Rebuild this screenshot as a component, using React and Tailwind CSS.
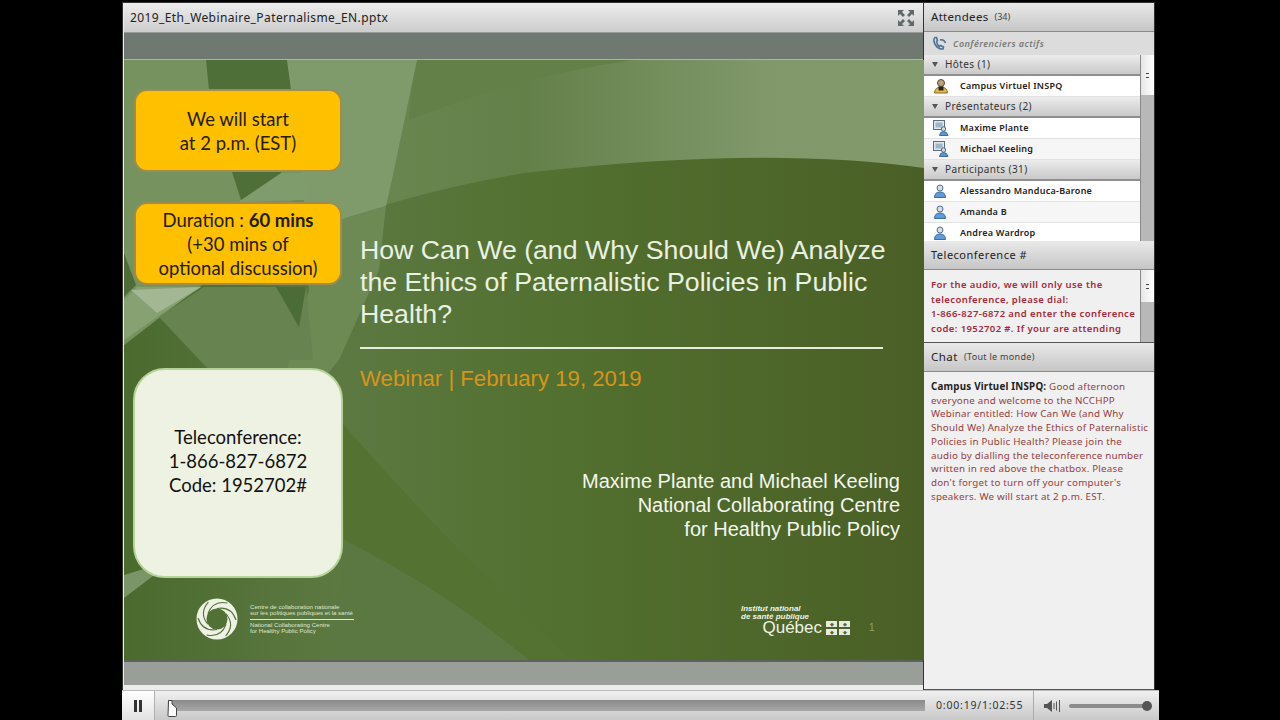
const ui = "font-['Noto_Sans',sans-serif]";

function GroupHeader({ label }) {
  return (
    <div className="h-[21px] flex items-center pl-[8px] bg-gradient-to-b from-[#ececec] to-[#c9c9c9] border-b-2 border-[#8f8f8f] text-[10px] tracking-[0.4px] text-[#333] shrink-0">
      <span className="w-0 h-0 border-l-[3px] border-r-[3px] border-t-[5px] border-l-transparent border-r-transparent border-t-[#555] mr-[7px]" />
      {label}
    </div>
  );
}

function HostIcon() {
  return (
    <svg width="16" height="16" viewBox="0 0 16 16">
      <circle cx="8" cy="5" r="3.5" fill="#b9a27a" stroke="#5b4a2a" />
      <path d="M1.5 15 Q2 9 8 9 Q14 9 14.5 15 Z" fill="#e6b84a" stroke="#8a6a20" />
      <rect x="5.5" y="8.5" width="5" height="4" fill="#222" />
    </svg>
  );
}

function PresenterIcon() {
  return (
    <svg width="16" height="16" viewBox="0 0 16 16">
      <rect x="0.5" y="0.5" width="11" height="9" fill="#dce6ee" stroke="#5c6c7a" />
      <rect x="2.5" y="2.5" width="7" height="5" fill="#9fb5c8" />
      <circle cx="10.5" cy="9" r="2.2" fill="#d5dce2" stroke="#4d6c8e" />
      <path d="M6.5 15.5 Q7 11.5 10.5 11.5 Q14 11.5 15 15.5 Z" fill="#5c97d2" stroke="#3d6c9e" />
    </svg>
  );
}

function ParticipantIcon() {
  return (
    <svg width="14" height="14" viewBox="0 0 14 14">
      <path d="M4 4 Q4 1 7 1 Q10 1 10 4 Q10 7 7 7 Q4 7 4 4 Z" fill="#d8dde2" stroke="#4f6f92" />
      <path d="M1.5 13.5 Q1.5 8 7 8 Q12.5 8 12.5 13.5 Z" fill="#5f9bd8" stroke="#3d6c9e" />
    </svg>
  );
}

function AttendeeRow({ name, icon, alt }) {
  return (
    <div className={`h-[21px] shrink-0 flex items-center border-b border-[#e2e2e2] ${alt ? "bg-[#f6f6f6]" : "bg-white"}`}>
      <span className="w-[36px] pl-[9px] flex items-center shrink-0">{icon}</span>
      <span className="text-[9px] font-semibold tracking-[0.25px] text-[#222]">{name}</span>
    </div>
  );
}

function Scrollbar({ thumb }) {
  return (
    <div className="w-[14px] bg-[#b8b8b8] border-l border-[#8a8a8a] shrink-0">
      <div className={`${thumb} bg-gradient-to-r from-[#e6e6e6] to-white flex items-center justify-center`}>
        <span className="w-[3px] h-[5px] border-y border-[#444]" />
      </div>
    </div>
  );
}

function PanelHeader({ children }) {
  return (
    <div className="h-[29px] shrink-0 flex items-center pl-[7px] bg-gradient-to-b from-[#e9e9e9] to-[#c6c6c6] border-b border-[#8a8a8a] text-[#222]">
      {children}
    </div>
  );
}

function SlideBackground() {
  return (
    <svg className="absolute inset-0 w-full h-full" viewBox="0 0 800 600" preserveAspectRatio="none">
      <defs>
        <linearGradient id="base" x1="0" x2="1" y1="0" y2="0">
          <stop offset="0" stopColor="#4a6a2e" />
          <stop offset="0.27" stopColor="#5c7942" />
          <stop offset="0.55" stopColor="#52702f" />
          <stop offset="1" stopColor="#4a5f26" />
        </linearGradient>
        <linearGradient id="upper" x1="0" x2="1" y1="0" y2="0">
          <stop offset="0.3" stopColor="#6b8751" />
          <stop offset="0.5" stopColor="#648049" />
          <stop offset="0.8" stopColor="#80986a" />
          <stop offset="1" stopColor="#829a6c" />
        </linearGradient>
      </defs>
      <rect width="800" height="600" fill="url(#base)" />
      {/* lower sweeps */}
      <path d="M218 363 Q320 480 447 600 L405 600 Q320 530 220 480 Z" fill="#547231" />
      <path d="M220 480 Q320 530 405 600 H200 L218 517 Z" fill="#5c7842" />
      <path d="M0 515 L50 500 L0 538 Z" fill="#7a9668" />
      {/* upper band */}
      <path d="M0 0 H800 V108 Q640 85 400 113 Q300 130 222 158 L75 227 L0 285 Z" fill="url(#upper)" />
      <path d="M290 0 H510 Q400 15 285 60 Z" fill="#648049" />
      <path d="M0 0 H163 L180 130 L75 227 L0 285 Z" fill="#76935f" />
      <path d="M160 0 H293 L270 110 L262 146 L222 158 L180 175 L180 130 Z" fill="#7f9b6b" />
      <path d="M180 175 L222 158 L262 146 L255 210 L215 300 L165 300 L185 230 Z" fill="#6d8a55" />
      <path d="M117 140 L157 113 L180 113 L184 140 L115 142 Z" fill="#7f9c6c" />
      <path d="M82 0 H163 L167 30 L157 113 L117 140 L108 112 L85 30 Z" fill="#4f6f38" />
      <path d="M35 257 L80 227 H182 L190 310 H85 Z" fill="#678450" />
      <path d="M165 300 L215 300 L205 312 H163 Z" fill="#6d8a55" />
      <path d="M152 227 H182 L175 267 Z" fill="#4c6c37" />
      <path d="M0 240 L13 227 H77 L33 257 L0 280 Z" fill="#87a172" />
      <path d="M7 230 L77 227 L33 253 Z" fill="#a3b795" />
      <path d="M0 193 L12 225 L0 237 Z" fill="#4d6c37" />
    </svg>
  );
}

function CallBox({ children, className }) {
  return (
    <div className={`w-[208px] bg-[#ffc000] border-2 border-[#a08c4c] rounded-[13px] flex flex-col items-center justify-center text-[#241c00] text-[18.5px] leading-[24px] text-center ${className}`}>
      {children}
    </div>
  );
}

function Spiral() {
  return (
    <svg width="42" height="42" viewBox="0 0 42 42" fill="none">
      <circle cx="21" cy="21" r="15.5" stroke="#eef2e4" strokeWidth="10" />
      {[0, 60, 120, 180, 240, 300].map((a) => (
        <path key={a} d="M21 10.5 C30 9 37 13 40 22" stroke="#547136" strokeWidth="1.1" transform={`rotate(${a} 21 21)`} />
      ))}
    </svg>
  );
}

function QuebecFlag() {
  return (
    <div className="grid grid-cols-2 gap-x-[2px] gap-y-[2px] ml-[4px]">
      {[0, 1, 2, 3].map((i) => (
        <span key={i} className="w-[11px] h-[6px] bg-[#e8ebe0] flex items-center justify-center text-[5px] leading-none text-[#4f6a2c]">
          ◆
        </span>
      ))}
    </div>
  );
}

export default function App() {
  return (
    <div className={`w-[1280px] h-[720px] bg-black overflow-hidden pl-[122px] pt-[2px] ${ui}`}>
      <div className="w-[1037px] h-[718px] flex flex-col bg-black">
        <div className="h-[688px] flex shrink-0">
          {/* document pod */}
          <div className="w-[801px] flex flex-col border-l border-t border-[#333] pl-[1px] bg-[#ececec]">
            <div className="h-[30px] flex items-center justify-between pl-[6px] pr-[9px] bg-gradient-to-b from-[#ededed] to-[#cdcdcd] border-b border-[#9a9a9a]">
              <span className="text-[12px] tracking-[0.4px] text-[#222]">2019_Eth_Webinaire_Paternalisme_EN.pptx</span>
              <svg width="16" height="16" viewBox="0 0 16 16" fill="#5f6a6a">
                <path d="M0 0H6L4 2L7 5L5 7L2 4L0 6Z" />
                <path d="M16 0H10L12 2L9 5L11 7L14 4L16 6Z" />
                <path d="M0 16H6L4 14L7 11L5 9L2 12L0 10Z" />
                <path d="M16 16H10L12 14L9 11L11 9L14 12L16 10Z" />
              </svg>
            </div>
            <div className="h-[27px] bg-[#6f7871] border-b border-[#a9b5a3]" />
            <div className="relative h-[600px] w-[800px] overflow-hidden flex">
              <SlideBackground />
              <div className="relative w-[236px] shrink-0 pl-[10px] pt-[29px] flex flex-col font-['Lato',sans-serif]">
                <CallBox className="h-[83px]">
                  <span>We will start</span>
                  <span>at 2 p.m. (EST)</span>
                </CallBox>
                <CallBox className="h-[83px] mt-[30px]">
                  <span>Duration : <b>60 mins</b></span>
                  <span>(+30 mins of</span>
                  <span>optional discussion)</span>
                </CallBox>
                <div className="w-[210px] h-[210px] -ml-[1px] mt-[83px] bg-[#eef2e2] border-2 border-[#b7d39a] rounded-[32px] flex flex-col items-center justify-center text-[#111] text-[18.5px] leading-[24px] pb-[25px]">
                  <span>Teleconference:</span>
                  <span>1-866-827-6872</span>
                  <span>Code: 1952702#</span>
                </div>
                <div className="flex items-center mt-[20px] pl-[62px] w-[300px]">
                  <Spiral />
                  <div className="ml-[12px] text-[#dfe6d2] text-[6.1px] leading-[6.5px] font-['Liberation_Sans',sans-serif] whitespace-nowrap">
                    <div className="border-b border-[#dfe6d2] pb-[2px] mb-[2px] w-[104px]">Centre de collaboration nationale<br />sur les politiques publiques et la santé</div>
                    <div>National Collaborating Centre<br />for Healthy Public Policy</div>
                  </div>
                </div>
              </div>
              <div className="relative flex-1 pt-[174px] font-['Liberation_Sans',sans-serif] flex flex-col">
                <h1 className="text-[26.7px] leading-[32px] text-[#eaf0e2] w-[540px] font-normal">
                  How Can We (and Why Should We) Analyze the Ethics of Paternalistic Policies in Public Health?
                </h1>
                <div className="h-[2px] w-[523px] bg-[#e8ecdd] mt-[17px]" />
                <div className="text-[22.2px] leading-[24px] text-[#d8941a] mt-[18px]">Webinar | February 19, 2019</div>
                <div className="mt-[78px] w-[540px] text-right text-[#f4f6ef] text-[20px] leading-[24px]">
                  <div>Maxime Plante and Michael Keeling</div>
                  <div>National Collaborating Centre</div>
                  <div>for Healthy Public Policy</div>
                </div>
                <div className="flex items-end mt-[64px] ml-[381px]">
                  <div className="w-[109px] text-[#eef2e4]">
                    <div className="text-[8px] leading-[7.5px] font-bold italic">Institut national<br />de santé publique</div>
                    <div className="flex items-center justify-end mt-[1px]">
                      <span className="text-[17px] leading-[14px]">Québec</span>
                      <QuebecFlag />
                    </div>
                  </div>
                  <span className="text-[10px] text-[#8fa176] ml-[19px]">1</span>
                </div>
              </div>
            </div>
            <div className="h-[25px] bg-[#9a9e99] border-t-2 border-[#5e625c]" />
          </div>

          {/* right column */}
          <div className="w-[232px] flex flex-col border-t border-r border-l border-[#333] bg-[#f0f0f0]">
            <PanelHeader>
              <span className="text-[11.5px] tracking-[0.3px]">Attendees</span>
              <span className="text-[9px] ml-[6px] text-[#444]">(34)</span>
            </PanelHeader>
            <div className="h-[23px] shrink-0 flex items-center pl-[8px] bg-[#dcdcdc] text-[#7a7a7a] italic text-[9px] tracking-[0.45px] font-semibold">
              <svg width="15" height="15" viewBox="0 0 15 15" fill="none" stroke="#4d7396" strokeWidth="1.6" className="mr-[6px]">
                <path d="M3 1.5 Q0.5 4 3.5 9 Q6.5 13.5 11 13 L11.5 11 L8.5 9.5 L7.5 10.5 Q5 9 4.5 5.5 L5.5 4.5 L4.5 1.5 Z" />
                <path d="M8 4 Q12 3 13.5 7" />
              </svg>
              Conférenciers actifs
            </div>
            <div className="h-[186px] shrink-0 flex overflow-hidden">
              <div className="flex-1 flex flex-col">
                <GroupHeader label="Hôtes (1)" />
                <AttendeeRow name="Campus Virtuel INSPQ" icon={<HostIcon />} />
                <GroupHeader label="Présentateurs (2)" />
                <AttendeeRow name="Maxime Plante" icon={<PresenterIcon />} />
                <AttendeeRow name="Michael Keeling" icon={<PresenterIcon />} alt />
                <GroupHeader label="Participants (31)" />
                <AttendeeRow name="Alessandro Manduca-Barone" icon={<ParticipantIcon />} />
                <AttendeeRow name="Amanda B" icon={<ParticipantIcon />} alt />
                <AttendeeRow name="Andrea Wardrop" icon={<ParticipantIcon />} />
              </div>
              <Scrollbar thumb="h-[40px]" />
            </div>
            <PanelHeader>
              <span className="text-[11px] tracking-[0.5px]">Teleconference #</span>
            </PanelHeader>
            <div className="h-[73px] shrink-0 flex border-b border-[#555]">
              <div className="flex-1 pl-[7px] pt-[8px] text-[9.5px] leading-[14.7px] font-semibold tracking-[0.4px] text-[#a62b3a] overflow-hidden whitespace-nowrap">
                <div>For the audio, we will only use the</div>
                <div>teleconference, please dial:</div>
                <div>1-866-827-6872 and enter the conference</div>
                <div>code: 1952702 #. If your are attending</div>
              </div>
              <Scrollbar thumb="h-[32px]" />
            </div>
            <PanelHeader>
              <span className="text-[11.5px] tracking-[0.5px]">Chat</span>
              <span className="text-[9px] ml-[6px] tracking-[0.3px] text-[#444]">(Tout le monde)</span>
            </PanelHeader>
            <div className="flex-1 pl-[7px] pt-[8px] text-[9.8px] leading-[13.7px] tracking-[0.2px] text-[#943f3f] border-b border-[#555] whitespace-nowrap">
              <span className="font-bold text-[#222]">Campus Virtuel INSPQ:</span> Good afternoon<br />
              everyone and welcome to the NCCHPP<br />
              Webinar entitled: How Can We (and Why<br />
              Should We) Analyze the Ethics of Paternalistic<br />
              Policies in Public Health? Please join the<br />
              audio by dialling the teleconference number<br />
              written in red above the chatbox. Please<br />
              don't forget to turn off your computer's<br />
              speakers. We will start at 2 p.m. EST.
            </div>
          </div>
        </div>

        {/* playback bar */}
        <div className="flex-1 flex items-center bg-gradient-to-b from-[#f0f0f0] to-[#c9c9c9] border-t border-[#bbb]">
          <div className="w-[33px] h-full flex items-center justify-center bg-gradient-to-b from-white to-[#e2e2e2] border-r border-[#b0b0b0]">
            <svg width="8" height="12" viewBox="0 0 8 12" fill="#333">
              <rect width="3" height="12" />
              <rect x="5" width="3" height="12" />
            </svg>
          </div>
          <div className="relative w-[757px] h-[11px] ml-[13px] bg-gradient-to-b from-[#8a8a8a] to-[#a8a8a8]">
            <svg className="absolute -left-[1px] top-[0px]" width="11" height="17" viewBox="0 0 11 17">
              <path d="M1.5 0.5 H5 V4 L9.5 8 V15.5 Q9.5 16.5 8.5 16.5 H2 Q1 16.5 1 15.5 Z" fill="#fff" stroke="#444" />
            </svg>
          </div>
          <span className="ml-[11px] w-[97px] text-[10.5px] tracking-[0.8px] text-[#333] whitespace-nowrap">0:00:19/1:02:55</span>
          <div className="h-full flex items-center pl-[10px] border-l border-[#aaa]">
            <svg width="17" height="14" viewBox="0 0 17 14" fill="#555">
              <path d="M0 5H3L8 1V13L3 9H0Z" />
              <path d="M10 4V10M12.5 2.5V11.5M15.5 1V13" stroke="#555" strokeWidth="1" />
            </svg>
            <div className="relative w-[80px] h-[4px] ml-[8px] bg-[#8c8c8c] rounded-full">
              <div className="absolute right-[-3px] top-[-3px] w-[10px] h-[10px] rounded-full bg-[#555]" />
            </div>
          </div>
        </div>
      </div>
    </div>
  );
}
